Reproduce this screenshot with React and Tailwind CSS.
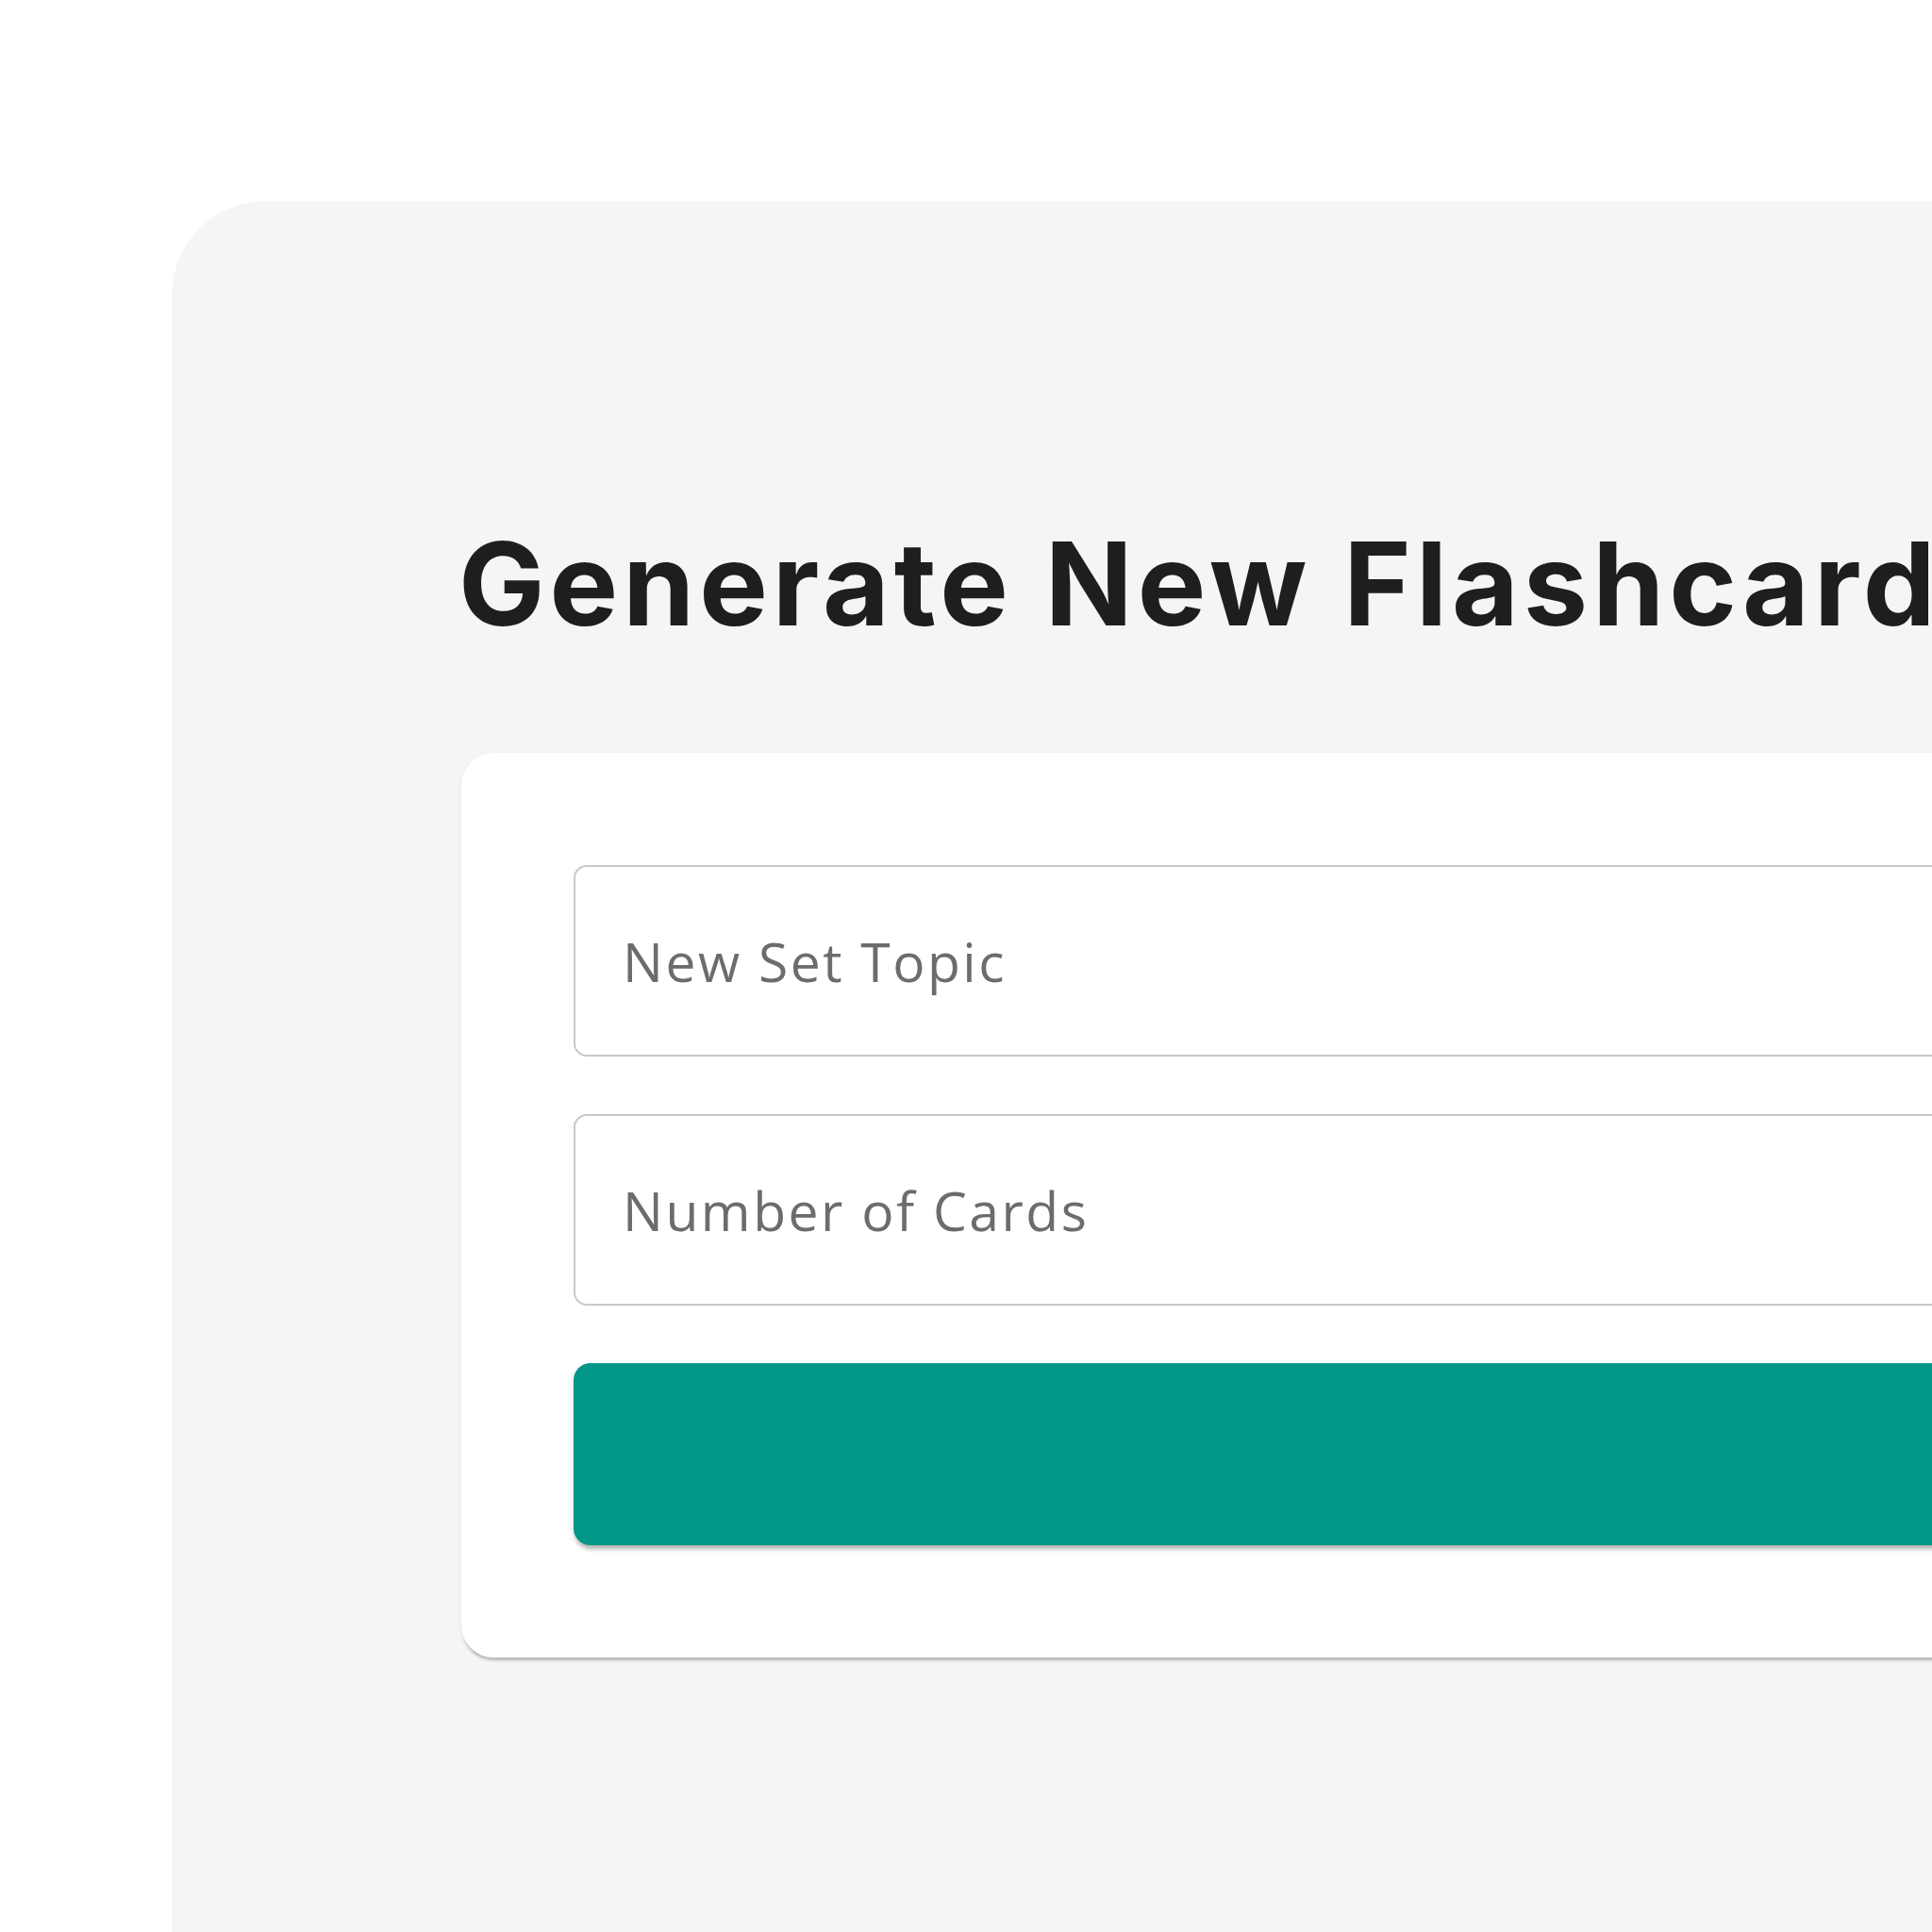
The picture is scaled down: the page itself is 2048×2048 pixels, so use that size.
import React from 'react';

const fieldClass =
  'h-[203px] w-full rounded-[14px] border-2 border-[#c8c8c8] bg-white px-[50px] text-[57px] tracking-[2.5px] text-[#333] placeholder:text-[#6c6c6c] outline-none';

export default function App() {
  return (
    <div className="w-screen h-screen overflow-hidden bg-white pt-[213px] pl-[182px]" style={{ fontFamily: 'Inter, "Noto Sans", sans-serif' }}>
      {/* main panel, runs off the right and bottom edges */}
      <div className="w-[2100px] h-[2000px] bg-[#f5f5f5] rounded-tl-[100px] pl-[307px] pt-[345px]">
        <h1 className="-ml-[3px] text-[122px] leading-none font-bold tracking-[5px] text-[#1e1e1e] whitespace-nowrap">
          Generate New Flashcards
        </h1>

        <div className="mt-[118px] w-[1900px] bg-white rounded-[34px] p-[119px] shadow-[0_5px_3px_-2px_rgba(0,0,0,0.22),0_2px_6px_0_rgba(0,0,0,0.06)]">
          <div className="flex flex-col gap-[61px]" style={{ fontFamily: '"Open Sans", sans-serif' }}>
            <input type="text" placeholder="New Set Topic" className={fieldClass} />
            <input type="text" placeholder="Number of Cards" className={fieldClass} />
            <button className="h-[193px] w-full rounded-[18px] bg-[#009688] text-white text-[52px] font-medium shadow-[0_6px_4px_-2px_rgba(0,0,0,0.25),0_2px_8px_0_rgba(0,0,0,0.1)]">
            </button>
          </div>
        </div>
      </div>
    </div>
  );
}
